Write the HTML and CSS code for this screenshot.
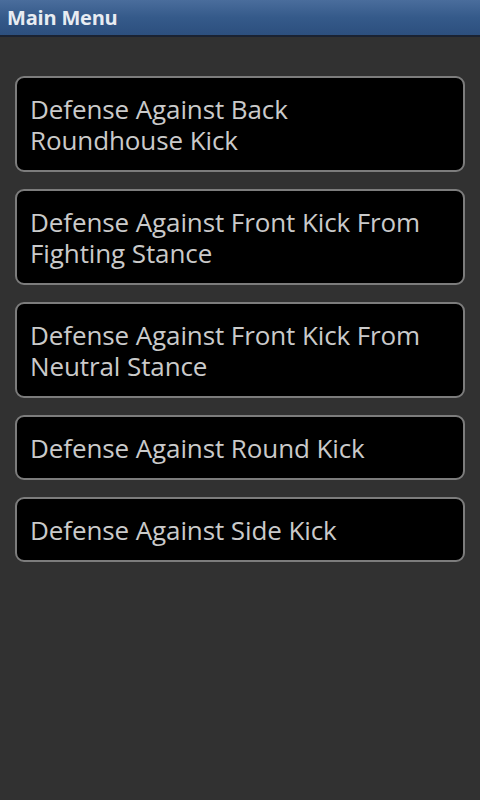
FILE: index.html
```html
<!DOCTYPE html>
<html>
<head>
<meta charset="utf-8">
<link rel="stylesheet" href="styles.css">
</head>
<body>
<div class="titlebar">Main Menu</div>
<div class="menu">
  <div class="item">Defense Against Back Roundhouse Kick</div>
  <div class="item">Defense Against Front Kick From Fighting Stance</div>
  <div class="item">Defense Against Front Kick From Neutral Stance</div>
  <div class="item">Defense Against Round Kick</div>
  <div class="item">Defense Against Side Kick</div>
</div>
</body>
</html>
```
FILE: styles.css
```css
html, body {
  margin: 0;
  padding: 0;
}
body {
  width: 480px;
  height: 800px;
  background: #313131;
  font-family: "Open Sans", "DejaVu Sans", sans-serif;
  overflow: hidden;
}
.titlebar {
  height: 37px;
  box-sizing: border-box;
  background: linear-gradient(to bottom, #4a6d9c 0%, #355a8a 50%, #2c4f7e 100%);
  border-bottom: 2px solid #1a2232;
  color: #e8ecf2;
  font-weight: bold;
  font-size: 20px;
  line-height: 36px;
  padding-left: 7px;
  letter-spacing: -0.2px;
}
.menu {
  display: flex;
  flex-direction: column;
  gap: 17px;
  padding: 39px 15px 0 15px;
}
.item {
  background: #000;
  border: 2px solid #7c7c7c;
  border-radius: 9px;
  color: #cacaca;
  font-size: 26px;
  line-height: 31px;
  padding: 16px 24px 14px 13px;
  letter-spacing: -0.1px;
}
```
